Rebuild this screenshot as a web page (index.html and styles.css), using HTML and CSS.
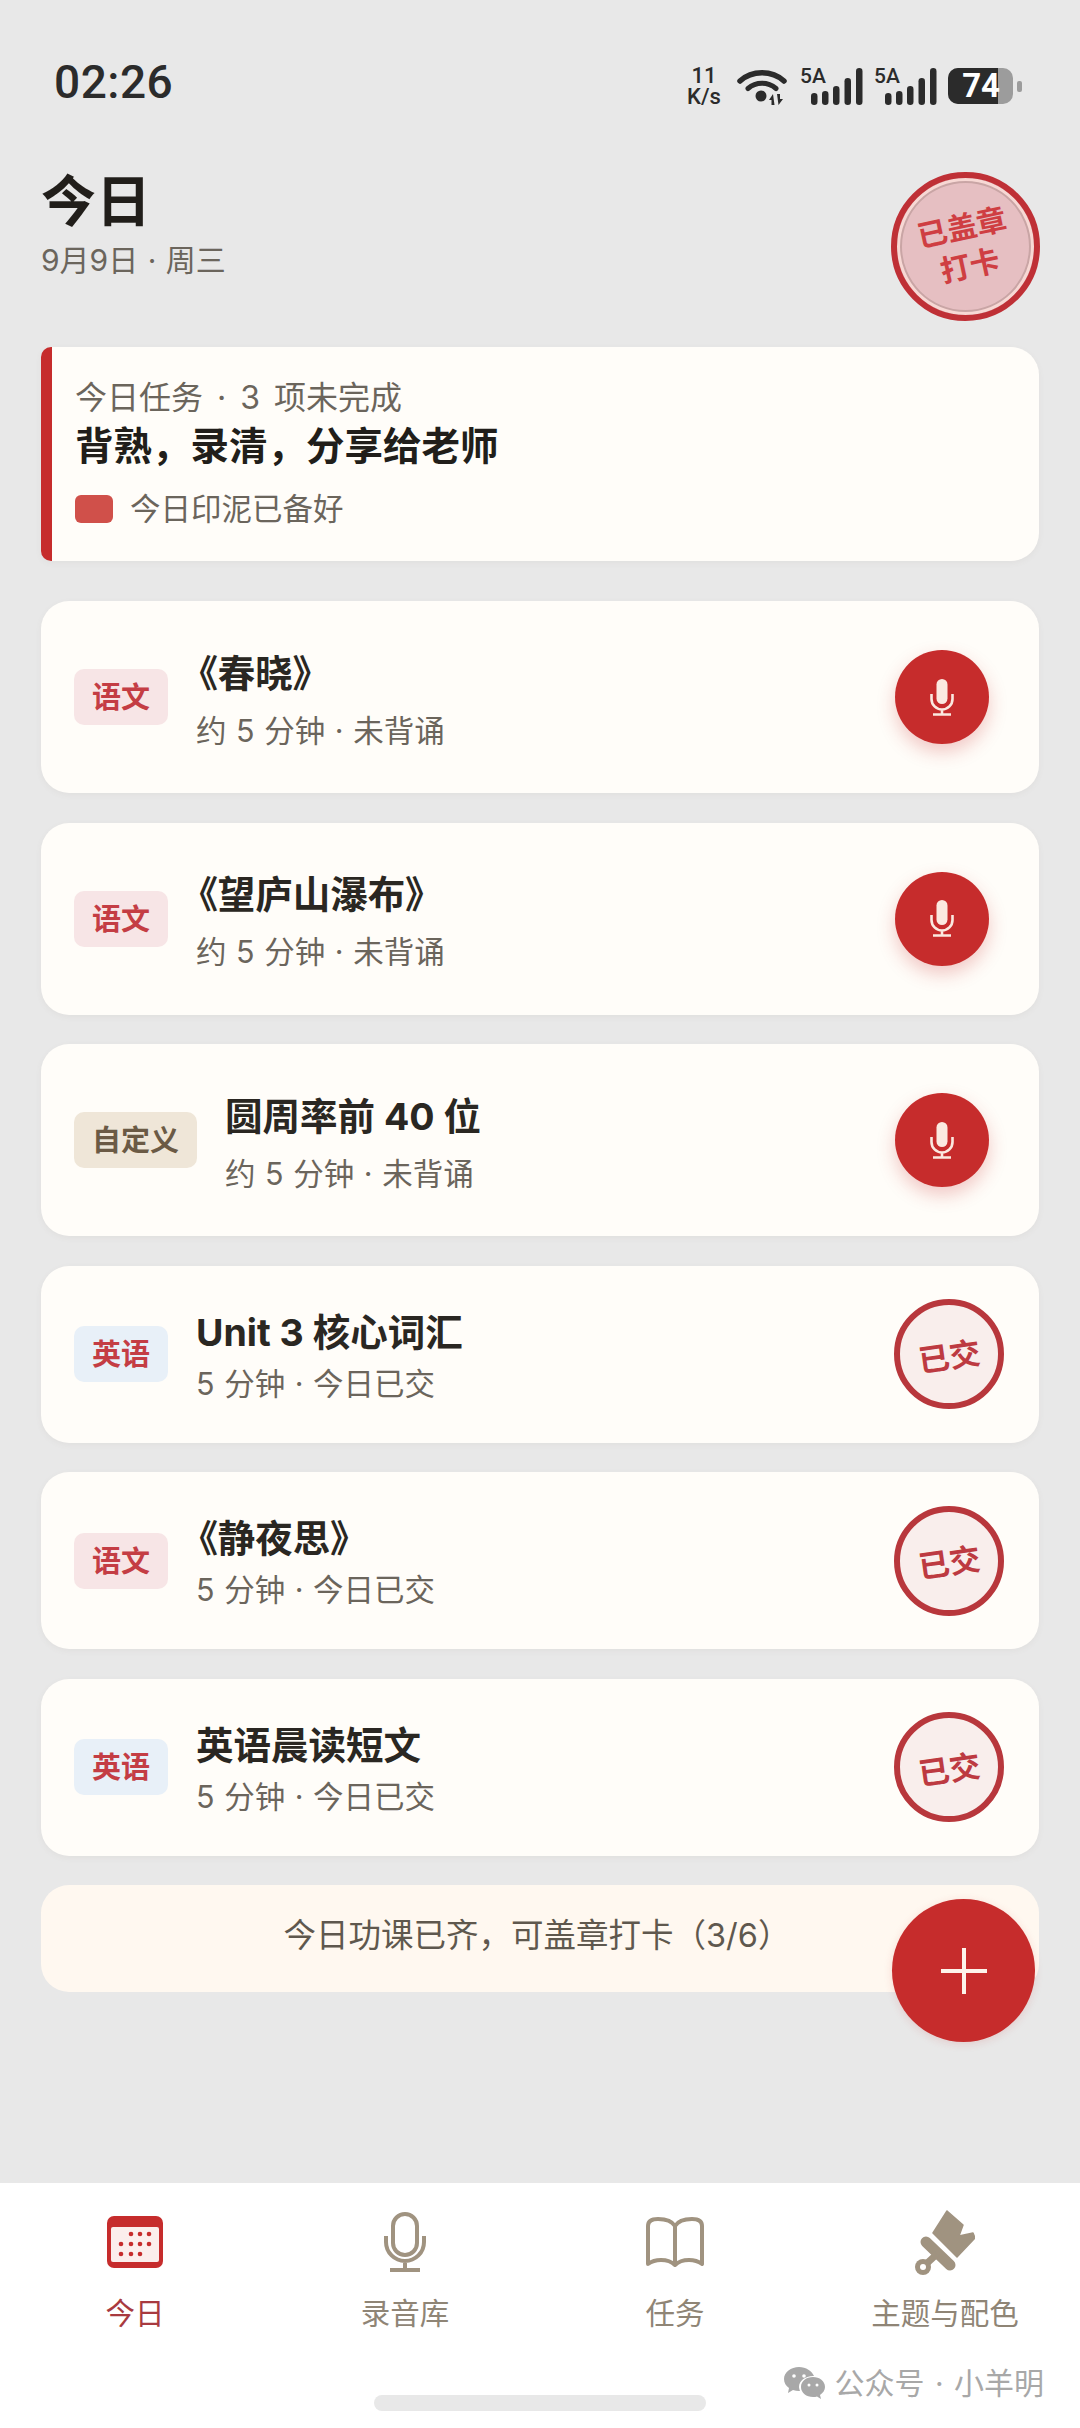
FILE: index.html
```html
<!DOCTYPE html>
<html lang="zh-CN">
<head>
  <meta charset="UTF-8" />
  <meta name="viewport" content="width=device-width, initial-scale=1.0" />
  <title>今日</title>
  <link rel="stylesheet" href="styles.css">
</head>
<body>
  <svg class="defs" width="0" height="0">
    <symbol id="mic-solid" viewBox="0 0 24 37">
      <rect x="6.5" y="0" width="11" height="25" rx="5.5" fill="currentColor" />
      <path d="M1.5 15v5a10.5 10.5 0 0 0 21 0v-5M12 30.5V35M3 35.5h18" fill="none" stroke="currentColor" stroke-width="2.6" />
    </symbol>
    <symbol id="bars" viewBox="0 0 52 37">
      <rect x="0" y="25" width="6.5" height="12" rx="3.2" />
      <rect x="11" y="23" width="6.5" height="14" rx="3.2" />
      <rect x="22" y="18" width="6.5" height="19" rx="3.2" />
      <rect x="33.5" y="10" width="6.5" height="27" rx="3.2" />
      <rect x="45" y="0" width="6.5" height="37" rx="3.2" />
    </symbol>
  </svg>

  <div class="app">
    <!-- 状态栏 -->
    <div class="status-bar">
      <span class="clock">02:26</span>
      <div class="status-icons">
        <span class="net-speed">11<br>K/s</span>
        <svg class="wifi" viewBox="0 0 50 36" width="50" height="36">
          <path d="M3 12C15 1 35 1 47 12" fill="none" stroke="#2b2b2b" stroke-width="5.5" stroke-linecap="round" />
          <path d="M11 19.5C19 12.5 31 12.5 39 19.5" fill="none" stroke="#2b2b2b" stroke-width="5" stroke-linecap="round" />
          <circle cx="24" cy="27" r="5.5" fill="#2b2b2b" />
          <path d="M36 25l-4 6h2.5v5h3zM40 25h3v5h3l-4.500 6z" fill="#2b2b2b" />
        </svg>
        <div class="signal">
          <span class="signal-type">5A</span>
          <svg class="signal-bars" width="52" height="37"><use href="#bars" /></svg>
        </div>
        <div class="signal">
          <span class="signal-type">5A</span>
          <svg class="signal-bars" width="52" height="37"><use href="#bars" /></svg>
        </div>
        <div class="battery">
          <div class="battery-body"><span class="battery-level"></span><span class="battery-text">74</span></div>
          <span class="battery-tip"></span>
        </div>
      </div>
    </div>

    <div class="content">
      <div class="page-head">
        <div>
          <h1 class="page-title">今日</h1>
          <p class="page-date">9月9日 · 周三</p>
        </div>
        <div class="seal"><span class="seal-text">已盖章<br>打卡</span></div>
      </div>

      <div class="hero">
        <p class="hero-count">今日任务 · 3 项未完成</p>
        <p class="hero-title">背熟，录清，分享给老师</p>
        <div class="hero-ink"><span class="ink-swatch"></span>今日印泥已备好</div>
      </div>

      <div class="tasks">
        <div class="task">
          <span class="tag tag-cn">语文</span>
          <div class="task-text">
            <p class="task-title title-quoted">《春晓》</p>
            <p class="task-sub">约 5 分钟 · 未背诵</p>
          </div>
          <button class="rec-btn"><svg width="24" height="37"><use href="#mic-solid" /></svg></button>
        </div>
        <div class="task">
          <span class="tag tag-cn">语文</span>
          <div class="task-text">
            <p class="task-title title-quoted">《望庐山瀑布》</p>
            <p class="task-sub">约 5 分钟 · 未背诵</p>
          </div>
          <button class="rec-btn"><svg width="24" height="37"><use href="#mic-solid" /></svg></button>
        </div>
        <div class="task">
          <span class="tag tag-custom">自定义</span>
          <div class="task-text">
            <p class="task-title">圆周率前 40 位</p>
            <p class="task-sub">约 5 分钟 · 未背诵</p>
          </div>
          <button class="rec-btn"><svg width="24" height="37"><use href="#mic-solid" /></svg></button>
        </div>
        <div class="task task-done">
          <span class="tag tag-en">英语</span>
          <div class="task-text">
            <p class="task-title">Unit 3 核心词汇</p>
            <p class="task-sub">5 分钟 · 今日已交</p>
          </div>
          <div class="done-seal"><span>已交</span></div>
        </div>
        <div class="task task-done">
          <span class="tag tag-cn">语文</span>
          <div class="task-text">
            <p class="task-title title-quoted">《静夜思》</p>
            <p class="task-sub">5 分钟 · 今日已交</p>
          </div>
          <div class="done-seal"><span>已交</span></div>
        </div>
        <div class="task task-done">
          <span class="tag tag-en">英语</span>
          <div class="task-text">
            <p class="task-title">英语晨读短文</p>
            <p class="task-sub">5 分钟 · 今日已交</p>
          </div>
          <div class="done-seal"><span>已交</span></div>
        </div>
        <div class="banner">今日功课已齐，可盖章打卡（3/6）</div>
      </div>
    </div>

    <button class="fab">
      <svg width="46" height="46" viewBox="0 0 46 46">
        <path d="M23 0v46M0 23h46" stroke="#fdf3ea" stroke-width="4" stroke-linecap="round" />
      </svg>
    </button>

    <!-- 底部导航 -->
    <nav class="tabbar">
      <div class="tabs">
        <div class="tab tab-active">
          <div class="tab-icon">
            <svg width="56" height="52" viewBox="0 0 56 52">
              <rect x="0" y="0" width="56" height="52" rx="7" fill="#c62c2c" />
              <rect x="4" y="11" width="48" height="35" rx="2" fill="#fbeeec" />
              <g fill="#c62c2c">
                <circle cx="24" cy="18" r="2.3" /><circle cx="33" cy="18" r="2.3" /><circle cx="42" cy="18" r="2.3" />
                <circle cx="14" cy="28" r="2.3" /><circle cx="24" cy="28" r="2.3" /><circle cx="33" cy="28" r="2.3" /><circle cx="42" cy="28" r="2.3" />
                <circle cx="14" cy="38" r="2.3" /><circle cx="24" cy="38" r="2.3" /><circle cx="33" cy="38" r="2.3" />
              </g>
            </svg>
          </div>
          <span class="tab-label">今日</span>
        </div>
        <div class="tab">
          <div class="tab-icon">
            <svg width="42" height="60" viewBox="0 0 42 60" fill="none" stroke="#a09380" stroke-width="4">
              <rect x="9" y="2" width="24" height="41" rx="12" />
              <path d="M2 24v6a19 19 0 0 0 38 0v-6M21 49v9M6 58h30" />
            </svg>
          </div>
          <span class="tab-label">录音库</span>
        </div>
        <div class="tab">
          <div class="tab-icon">
            <svg width="58" height="50" viewBox="0 0 58 50" fill="none" stroke="#a09380" stroke-width="4" stroke-linejoin="round">
              <path d="M29 9C26 4 20 2 12 2 6 2 2 4 2 9v38c4-3 8-4 13-4 6 0 11 2 14 5 3-3 8-5 14-5 5 0 9 1 13 4V9c0-5-4-7-10-7-8 0-14 2-17 7zM29 9v39" />
            </svg>
          </div>
          <span class="tab-label">任务</span>
        </div>
        <div class="tab">
          <div class="tab-icon">
            <svg width="60" height="65" viewBox="0 0 60 65">
              <path d="M32 1l16 14-4 11 14-3 2 5-18 19-24-24z" fill="#a09380" stroke="#a09380" stroke-width="1.500" stroke-linejoin="round" />
              <path d="M10 31l25 25" stroke="#fff" stroke-width="18" />
              <path d="M11 32l24 23" stroke="#a09380" stroke-width="11" stroke-linecap="round" />
              <path d="M22 44L9 56" stroke="#a09380" stroke-width="7" />
              <circle cx="8" cy="57" r="8" fill="#a09380" />
              <circle cx="8" cy="57" r="3" fill="#fff" />
            </svg>
          </div>
          <span class="tab-label">主题与配色</span>
        </div>
      </div>
      <div class="home-bar"></div>
      <div class="watermark">
        <svg width="41" height="33" viewBox="0 0 41 33" fill="#a8a8a8">
          <path d="M15 0C7 0 0 5 0 12c0 4 2 7 5 9l-1 5 5-3c2 .5 4 1 6 1h1c-.500-1.500-1-3-1-4 0-6 6-11 14-11h1C28 4 22 0 15 0z" />
          <path d="M41 20c0-6-5.500-10-12-10s-12 4-12 10 5.500 10 12 10c1.500 0 3-.2 4-.6l4 2.600-1-4c3-2 5-4.800 5-8z" />
          <g fill="#fff"><circle cx="10" cy="9" r="1.800" /><circle cx="20" cy="9" r="1.800" /><circle cx="25" cy="18" r="1.500" /><circle cx="33" cy="18" r="1.500" /></g>
        </svg>
        <span>公众号 · 小羊明</span>
      </div>
    </nav>
  </div>
</body>
</html>
```

FILE: styles.css
```css
* { box-sizing: border-box; }
html, body { margin: 0; padding: 0; }
body {
  font-family: Inter, "Noto Sans CJK SC", sans-serif;
  background: #e8e8e8;
  color: #2a2722;
}
p, h1 { margin: 0; }
button { border: none; padding: 0; font: inherit; }
.defs { position: absolute; }

.app {
  position: relative;
  display: flex;
  flex-direction: column;
  width: 1080px;
  height: 2428px;
  overflow: hidden;
}

/* status bar */
.status-bar {
  display: flex;
  justify-content: space-between;
  align-items: flex-start;
  height: 169px;
  padding: 53px 58px 0 54px;
  font-family: Roboto, sans-serif;
}
.clock { font-size: 46px; line-height: 58px; font-weight: 500; color: #2b2b2b; letter-spacing: 0.5px; }
.status-icons { display: flex; align-items: center; margin-top: 12px; color: #2b2b2b; }
.net-speed {
  width: 42px;
  font-size: 22px;
  line-height: 21px;
  font-weight: 500;
  text-align: center;
  margin-right: 12px;
}
.wifi { margin-right: 13px; margin-top: 2px; }
.signal { position: relative; width: 63px; height: 37px; margin-right: 11px; }
.signal-type {
  position: absolute;
  left: 0;
  top: -2px;
  font-size: 21px;
  line-height: 21px;
  font-weight: 500;
}
.signal-bars { position: absolute; right: 0; top: 0; fill: #2b2b2b; }
.battery { display: flex; align-items: center; gap: 4px; }
.battery-body {
  position: relative;
  width: 65px;
  height: 36px;
  border-radius: 10px;
  background: #9c9c9c;
}
.battery-level {
  position: absolute;
  left: 0;
  top: 0;
  bottom: 0;
  width: 50px;
  border-radius: 10px 0 0 10px;
  background: #2b2b2b;
}
.battery-text {
  position: absolute;
  right: 13px;
  top: 0;
  font-size: 33px;
  line-height: 36px;
  font-weight: 700;
  color: #fff;
}
.battery-tip { width: 5px; height: 11px; border-radius: 2px; background: #9c9c9c; }

.content { padding: 0 41px; }

/* header */
.page-head { display: flex; justify-content: space-between; align-items: flex-start; }
.page-title { font-size: 55px; line-height: 64px; font-weight: 700; color: #211e1a; }
.page-date { margin-top: 6px; font-size: 30px; line-height: 42px; word-spacing: 1px; color: #6b655c; }
.seal {
  display: flex;
  align-items: center;
  justify-content: center;
  width: 149px;
  height: 149px;
  margin-top: 3px;
  margin-right: -1px;
  border: 6px solid #bf3036;
  border-radius: 50%;
  background: #e6bfc2;
  box-shadow: inset 0 0 0 3px #f7d8d4, inset 0 0 0 5px #c9a5a5;
}
.seal-text {
  font-size: 30px;
  line-height: 39px;
  font-weight: 700;
  color: #cf3e42;
  text-align: center;
  transform: rotate(-12deg);
}

/* today's card */
.hero {
  margin-top: 26px;
  padding: 30px 30px 32px 23px;
  background: #fffdf9;
  border-left: 11px solid #c62c2c;
  border-radius: 10px 28px 28px 10px;
  box-shadow: 0 2px 6px rgba(120, 100, 80, 0.06);
}
.hero-count { font-size: 32px; line-height: 42px; word-spacing: 5px; color: #6b655c; }
.hero-title { font-size: 38.5px; line-height: 54px; font-weight: 700; color: #211e1a; }
.hero-ink {
  display: flex;
  align-items: center;
  gap: 17px;
  margin-top: 16px;
  font-size: 30.5px;
  line-height: 40px;
  color: #6b655c;
}
.ink-swatch { width: 38px; height: 28px; border-radius: 6px; background: #d0504a; }

/* task list */
.tasks { display: flex; flex-direction: column; gap: 29.5px; margin-top: 40px; }
.task {
  display: flex;
  align-items: center;
  gap: 28px;
  height: 192px;
  padding: 0 50px 0 33px;
  background: #fffdf9;
  border-radius: 28px;
  box-shadow: 0 2px 6px rgba(120, 100, 80, 0.06);
}
.task-done { height: 177px; padding-right: 35px; }
.tag {
  flex: none;
  height: 56px;
  padding: 0 18px;
  border-radius: 10px;
  font-size: 29px;
  line-height: 57px;
  font-weight: 700;
}
.tag-cn { background: #f7e5e6; color: #c43d44; }
.tag-en { background: #e8f0f8; color: #c43d44; }
.tag-custom { background: #efe6d8; color: #6b5a45; }
.task-text { flex: 1; padding-top: 10px; }
.task-title {
  font-size: 37.5px;
  line-height: 46px;
  font-weight: 700;
  font-feature-settings: "palt";
  color: #2a2722;
}
.title-quoted { margin-left: 3px; }
.task-sub { margin-top: 11px; font-size: 30.5px; line-height: 46px; word-spacing: 1px; color: #6b655c; }
.task-done .task-text { padding-top: 8px; }
.task-done .task-sub { margin-top: 5px; }
.rec-btn {
  display: flex;
  align-items: center;
  justify-content: center;
  flex: none;
  width: 94px;
  height: 94px;
  border-radius: 50%;
  background: #c62c2c;
  color: #fbe9e0;
  box-shadow: 0 8px 18px rgba(198, 44, 44, 0.25);
}
.done-seal {
  display: flex;
  align-items: center;
  justify-content: center;
  flex: none;
  width: 110px;
  height: 110px;
  border: 6px solid #b8373c;
  border-radius: 50%;
  background: #f9eeec;
  color: #bd3a41;
  font-size: 31px;
  font-weight: 700;
}
.done-seal span { transform: rotate(-8deg); }
.banner {
  height: 107px;
  padding-right: 6px;
  background: #fff8f0;
  border-radius: 28px;
  font-size: 32.5px;
  line-height: 102px;
  text-align: center;
  color: #5f584e;
}

.fab {
  position: absolute;
  left: 892px;
  top: 1899px;
  display: flex;
  align-items: center;
  justify-content: center;
  width: 143px;
  height: 143px;
  border-radius: 50%;
  background: #c62c2c;
  box-shadow: 0 2px 8px rgba(198, 44, 44, 0.15);
}

/* bottom nav */
.tabbar {
  position: relative;
  margin-top: auto;
  height: 245px;
  padding-top: 27px;
  background: #fff;
}
.tabs { display: grid; grid-template-columns: repeat(4, 1fr); }
.tab { display: flex; flex-direction: column; align-items: center; }
.tab-icon { display: flex; align-items: center; justify-content: center; height: 64px; }
.tab-label { margin-top: 19px; font-size: 29.5px; line-height: 40px; color: #8f8576; }
.tab-active .tab-label { color: #a83a40; }
.home-bar {
  width: 332px;
  height: 16px;
  margin: 62px auto 0;
  border-radius: 8px;
  background: #e8e8e8;
}
.watermark {
  position: absolute;
  right: 36px;
  bottom: 25px;
  display: flex;
  align-items: center;
  gap: 9px;
  font-size: 30px;
  line-height: 40px;
  word-spacing: 2px;
  color: #a8a8a8;
}
```
